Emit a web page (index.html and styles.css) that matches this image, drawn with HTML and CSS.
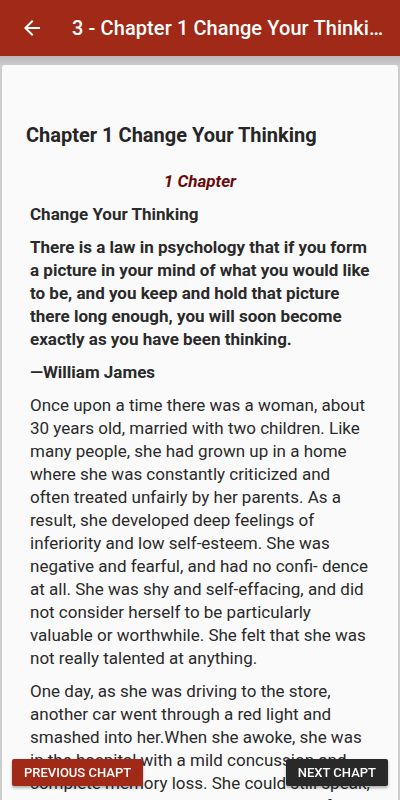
FILE: index.html
```html
<!DOCTYPE html>
<html>
<head>
<meta charset="utf-8">
<link rel="stylesheet" href="styles.css">
</head>
<body>
<header class="appbar">
  <svg class="back" width="24" height="24" viewBox="0 0 24 24"><path d="M20 11H7.83l5.59-5.59L12 4l-8 8 8 8 1.41-1.41L7.83 13H20v-2z" fill="#fff"/></svg>
  <h1 class="appbar-title">3 - Chapter 1 Change Your Thinking</h1>
</header>
<div class="shade"></div>
<main class="card">
  <h2 class="chapter-title">Chapter 1 Change Your Thinking</h2>
  <div class="content">
    <p class="chapter-num">1 Chapter</p>
    <p class="sub">Change Your Thinking</p>
    <p class="quote">There is a law in psychology that if you form a picture in your mind of what you would like to be, and you keep and hold that picture there long enough, you will soon become exactly as you have been thinking.</p>
    <p class="sub">—William James</p>
    <p>Once upon a time there was a woman, about 30 years old, married with two children. Like many people, she had grown up in a home where she was constantly criticized and often treated unfairly by her parents. As a result, she developed deep feelings of inferiority and low self-esteem. She was negative and fearful, and had no confi- dence at all. She was shy and self-effacing, and did not consider herself to be particularly valuable or worthwhile. She felt that she was not really talented at anything.</p>
    <p>One day, as she was driving to the store, another car went through a red light and smashed into her.When she awoke, she was in the hospital with a mild concussion and complete memory loss. She could still speak, but she could not remember anything of her past or of who she was.</p>
  </div>
</main>
<button class="btn btn-prev">PREVIOUS CHAPT</button>
<button class="btn btn-next">NEXT CHAPT</button>
</body>
</html>
```
FILE: styles.css
```css
html, body {
  margin: 0;
  padding: 0;
  height: 800px;
  overflow: hidden;
}
body {
  display: flex;
  flex-direction: column;
  background: #cdcdcd;
  font-family: Roboto, "Noto Sans", sans-serif;
}
.appbar {
  flex: none;
  height: 56px;
  background: #a02a17;
  display: flex;
  align-items: center;
  padding: 0 16px 0 20px;
  box-sizing: border-box;
  position: relative;
  z-index: 2;
}
.back {
  flex: none;
  margin-right: 28px;
}
.appbar-title {
  margin: 0;
  color: #fff;
  font-size: 20px;
  font-weight: 500;
  white-space: nowrap;
  overflow: hidden;
  text-overflow: ellipsis;
  letter-spacing: 0.1px;
}
.shade {
  flex: none;
  height: 9px;
  background: linear-gradient(#b9b9b9, #cbcbcb);
}
.card {
  flex: 1;
  min-height: 0;
  overflow: hidden;
  margin: 0 2px;
  background: #fafafa;
  border-radius: 3px 3px 0 0;
  padding: 58px 24px 0 24px;
  color: #2a2a2a;
}
.chapter-title {
  margin: 0 0 23px;
  font-size: 20px;
  font-weight: 700;
  line-height: 24px;
  color: #262626;
}
.content {
  padding: 0 4px;
}
.content p {
  margin: 0 0 10px;
  font-size: 17px;
  line-height: 23px;
}
.content .chapter-num {
  text-align: center;
  font-style: italic;
  font-weight: 700;
  color: #6a0a0a;
}
.content .sub {
  font-weight: 700;
}
.content .quote {
  font-weight: 700;
}
.btn {
  position: fixed;
  bottom: 14px;
  height: 27px;
  border: none;
  border-radius: 2px;
  color: #fff;
  font-family: Roboto, sans-serif;
  font-size: 13px;
  font-weight: 500;
  white-space: nowrap;
  padding: 0 12px;
  box-shadow: 0 2px 3px rgba(0,0,0,0.3);
}
.btn-prev {
  left: 12px;
  background: #a02a17;
}
.btn-next {
  right: 12px;
  background: #292929;
}
```
